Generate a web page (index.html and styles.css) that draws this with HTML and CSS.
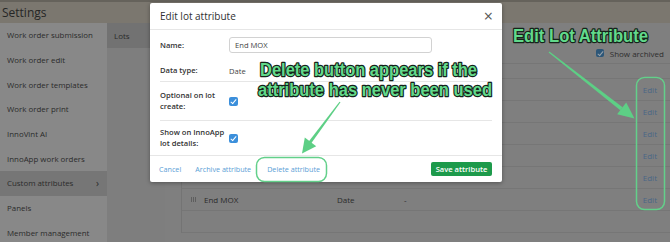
FILE: index.html
```html
<!DOCTYPE html>
<html lang="en">
<head>
    <meta charset="UTF-8">
    <meta name="viewport" content="width=device-width, initial-scale=1.0">
    <title>Settings - Custom attributes</title>
    <link rel="stylesheet" href="styles.css">
</head>
<body>
    <div class="app">
        <header class="topbar">Settings</header>
        <div class="layout">
            <nav class="sidebar">
                <div class="nav-item">Work order submission</div>
                <div class="nav-item">Work order edit</div>
                <div class="nav-item">Work order templates</div>
                <div class="nav-item">Work order print</div>
                <div class="nav-item">InnoVint AI</div>
                <div class="nav-item">InnoApp work orders</div>
                <div class="nav-item active">Custom attributes <span class="chev">&rsaquo;</span></div>
                <div class="nav-item">Panels</div>
                <div class="nav-item">Member management</div>
            </nav>
            <div class="subnav">
                <div class="tab active">Lots</div>
            </div>
            <main class="main">
                <div class="toolbar">
                    <span class="check dim"></span>
                    <span>Show archived</span>
                </div>
                <div class="table">
                    <div class="thead"></div>
                    <div class="row"><span class="grip"></span><span class="col-name">Start MOX</span><span class="col-type">Date</span><span class="col-val">-</span><a class="edit">Edit</a></div>
                    <div class="row"><span class="grip"></span><span class="col-name">Harvest block</span><span class="col-type">Text</span><span class="col-val">-</span><a class="edit">Edit</a></div>
                    <div class="row"><span class="grip"></span><span class="col-name">Program</span><span class="col-type">Text</span><span class="col-val">-</span><a class="edit">Edit</a></div>
                    <div class="row"><span class="grip"></span><span class="col-name">Tank notes</span><span class="col-type">Text</span><span class="col-val">-</span><a class="edit">Edit</a></div>
                    <div class="row"><span class="grip"></span><span class="col-name">Press date</span><span class="col-type">Date</span><span class="col-val">-</span><a class="edit">Edit</a></div>
                    <div class="row"><span class="grip"></span><span class="col-name">End MOX</span><span class="col-type">Date</span><span class="col-val">-</span><a class="edit">Edit</a></div>
                    <div class="row"></div>
                </div>
            </main>
        </div>
    </div>

    <div class="modal">
        <div class="modal-head">
            <span class="modal-title">Edit lot attribute</span>
            <span class="close">&times;</span>
        </div>
        <div class="modal-body">
            <div class="field f-name">
                <span class="label">Name:</span>
                <div class="input">End MOX</div>
            </div>
            <div class="field f-type">
                <span class="label">Data type:</span>
                <span class="value">Date</span>
            </div>
            <div class="field f-opt">
                <span class="label">Optional on lot<br>create:</span>
                <span class="check"></span>
            </div>
            <div class="field f-show">
                <span class="label">Show on InnoApp<br>lot details:</span>
                <span class="check"></span>
            </div>
        </div>
        <div class="modal-foot">
            <a class="link">Cancel</a>
            <a class="link">Archive attribute</a>
            <a class="link delete">Delete attribute</a>
            <button class="save">Save attribute</button>
        </div>
    </div>

    <svg class="notes" width="670" height="242" viewBox="0 0 670 242">
        <rect x="256.5" y="157.5" width="70" height="24" rx="8" class="ring"/>
        <rect x="636.5" y="77.5" width="28" height="132" rx="8" class="ring"/>
        <!-- arrow to delete button -->
        <polygon class="arrow" points="340.5,102.3 339.5,101.7 307.6,142.9 310.2,144.8"/>
        <polygon class="arrow" points="302,153.5 316.2,146.2 304.8,137.6"/>
        <!-- arrow to edit links -->
        <polygon class="arrow" points="549.4,51.4 548.6,52.6 620.3,110.2 622.6,107.2"/>
        <polygon class="arrow" points="634.5,118.5 617.1,114.2 626.2,102.4"/>
        <text class="note" x="260" y="76" textLength="217" lengthAdjust="spacingAndGlyphs">Delete button appears if the</text>
        <text class="note" x="258" y="96" textLength="234" lengthAdjust="spacingAndGlyphs">attribute has never been used</text>
        <text class="note" x="513" y="42" textLength="135" lengthAdjust="spacingAndGlyphs">Edit Lot Attribute</text>
    </svg>
</body>
</html>
```

FILE: styles.css
```css
body {
    margin: 0;
    width: 670px;
    height: 242px;
    overflow: hidden;
    font-family: "Open Sans", Arial, sans-serif;
    color: #2b2b2b;
}
.app {
    display: flex;
    flex-direction: column;
    height: 242px;
}
.topbar {
    height: 21px;
    line-height: 21px;
    border-top: 2px solid #65625b;
    background-color: #7b776f;
    padding-left: 2px;
    font-size: 12px;
    color: #262626;
}
.layout {
    display: flex;
    flex: 1;
}
.sidebar {
    width: 107px;
    background-color: #888888;
}
.nav-item {
    height: 24.7px;
    display: flex;
    align-items: center;
    padding-left: 7px;
    font-size: 7.9px;
    color: #2b2b2b;
    white-space: nowrap;
}
.nav-item.active {
    background-color: #767676;
    justify-content: space-between;
    padding-right: 8px;
}
.chev {
    font-size: 10px;
}
.subnav {
    width: 58px;
    background-color: #7e7e7e;
}
.tab {
    height: 25px;
    display: flex;
    align-items: center;
    padding-left: 7px;
    font-size: 8px;
}
.tab.active {
    background-color: #727272;
}
.main {
    flex: 1;
    background-color: #7f7f7f;
    padding: 20px 0 0 16px;
}
.toolbar {
    height: 20px;
    display: flex;
    align-items: center;
    justify-content: flex-end;
    gap: 6px;
    padding-right: 6px;
    font-size: 8px;
    color: #2e2e2e;
}
.table {
    border-left: 1px solid #747474;
    border-top: 1px solid #767676;
}
.thead {
    height: 14px;
    border-bottom: 1px solid #767676;
}
.row {
    height: 21px;
    display: flex;
    align-items: center;
    border-bottom: 1px solid #767676;
    font-size: 8px;
    color: #2b2b2b;
}
.grip {
    width: 6px;
    height: 5px;
    margin-left: 9px;
    margin-right: 7px;
    background: repeating-linear-gradient(90deg, #5e5e5e 0 1px, transparent 1px 2px);
}
.col-name {
    width: 133px;
}
.col-type {
    width: 67px;
}
.col-val {
    flex: 1;
}
.edit {
    margin-right: 13px;
    color: #4a6686;
}
.check {
    width: 9px;
    height: 9px;
    border-radius: 2px;
    background-color: #3b8fdb;
    position: relative;
    display: inline-block;
}
.check::after {
    content: "";
    position: absolute;
    left: 3px;
    top: 1px;
    width: 2px;
    height: 5px;
    border: solid #ffffff;
    border-width: 0 1.5px 1.5px 0;
    transform: rotate(40deg);
}
.check.dim {
    width: 8px;
    height: 8px;
    background-color: #2c5678;
}
.check.dim::after {
    border-color: #9aa3ab;
}

.modal {
    position: absolute;
    top: 3px;
    left: 150px;
    width: 352px;
    background-color: #ffffff;
    border-radius: 2px;
    box-shadow: 0 1px 4px rgba(0, 0, 0, 0.35);
}
.modal-head {
    height: 26px;
    display: flex;
    align-items: center;
    justify-content: space-between;
    padding: 0 9px 0 10px;
    border-bottom: 1px solid #e6e6e6;
}
.modal-title {
    font-size: 10px;
    color: #2f2f2f;
}
.close {
    font-size: 16px;
    color: #555555;
    line-height: 1;
}
.modal-body {
    padding: 0 10px;
}
.field {
    display: flex;
    align-items: center;
    font-size: 7.6px;
    color: #333333;
}
.label {
    width: 69px;
    flex-shrink: 0;
    font-weight: 600;
    line-height: 11px;
}
.f-name {
    height: 30px;
}
.f-type {
    height: 21px;
    border-bottom: 1px solid #e6e6e6;
}
.f-opt {
    height: 38px;
    border-bottom: 1px solid #e6e6e6;
}
.f-show {
    height: 34px;
}
.input {
    width: 196px;
    height: 14px;
    line-height: 14px;
    padding-left: 5px;
    border: 1px solid #d2d2d2;
    border-radius: 3px;
    color: #444444;
}
.value {
    color: #444444;
}
.modal-foot {
    height: 26px;
    display: flex;
    align-items: center;
    gap: 14px;
    padding: 0 10px 0 9px;
    border-top: 1px solid #e6e6e6;
}
.link {
    font-size: 7.2px;
    color: #5aa0d6;
}
.link.delete {
    margin-left: 2px;
}
.save {
    margin-left: auto;
    height: 14px;
    width: 61px;
    padding: 0;
    border: none;
    border-radius: 2px;
    background-color: #1d9a4b;
    color: #ffffff;
    font-family: "Open Sans", Arial, sans-serif;
    font-size: 7.6px;
    font-weight: 600;
}

.notes {
    position: absolute;
    top: 0;
    left: 0;
}
.ring {
    fill: none;
    stroke: #63d08a;
    stroke-width: 1.5;
}
.arrow {
    fill: #5dcf85;
}
.note {
    font-family: "Liberation Sans", Arial, sans-serif;
    font-weight: 700;
    font-size: 18px;
    fill: #62d98b;
    stroke: #15231a;
    stroke-width: 2.5;
    stroke-linejoin: round;
    paint-order: stroke;
}
```
